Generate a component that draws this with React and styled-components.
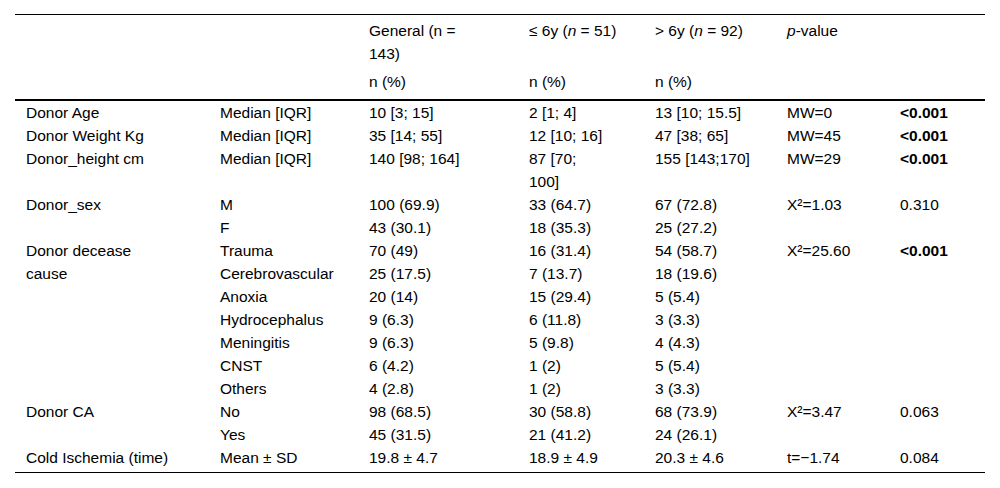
import styled, { createGlobalStyle } from 'styled-components';

const GlobalStyle = createGlobalStyle`
    body {
        margin: 0;
        background: #fff;
        font-family: "Liberation Sans", Arial, sans-serif;
        color: #000;
    }
`;

const Page = styled.div`
    width: 1000px;
    height: 488px;
    padding: 14px 15px 0 15px;
    box-sizing: border-box;
`;

const Table = styled.table`
    width: 970px;
    border-collapse: collapse;
    table-layout: fixed;
    font-size: 15.5px;
    line-height: 23px;
    border-top: 1px solid #000;
    border-bottom: 1px solid #000;
`;

const Head = styled.thead`
    border-bottom: 2px solid #000;
`;

const Th = styled.th`
    text-align: left;
    font-weight: normal;
    vertical-align: top;
    padding: ${({ $sub }) => ($sub ? '5px 0 6px 11px' : '4px 0 0 11px')};
`;

const Td = styled.td`
    vertical-align: top;
    padding: 0 0 0 11px;
    font-weight: ${({ $bold }) => ($bold ? 'bold' : 'normal')};
`;

const LastRow = styled.tr`
    & > td {
        padding-bottom: 3px;
    }
`;

const widths = [194, 149, 160, 126, 132, 113, 96];

const rows = [
    ['Donor Age', 'Median [IQR]', '10 [3; 15]', '2 [1; 4]', '13 [10; 15.5]', 'MW=0', '<0.001', true],
    ['Donor Weight Kg', 'Median [IQR]', '35 [14; 55]', '12 [10; 16]', '47 [38; 65]', 'MW=45', '<0.001', true],
    ['Donor_height cm', 'Median [IQR]', '140 [98; 164]', <>87 [70;<br />100]</>, '155 [143;170]', 'MW=29', '<0.001', true],
];

const Row = ({ cells, bold }) => (
    <tr>
        {cells.map((c, i) => (
            <Td key={i} $bold={bold && i === 6}>{c}</Td>
        ))}
    </tr>
);

const App = () => {
    return (
        <>
            <GlobalStyle />
            <Page>
                <Table>
                    <colgroup>
                        {widths.map((w, i) => <col key={i} style={{ width: w }} />)}
                    </colgroup>
                    <Head>
                        <tr>
                            <Th />
                            <Th />
                            <Th>General (n =<br />143)</Th>
                            <Th>≤ 6y (<i>n</i> = 51)</Th>
                            <Th>&gt; 6y (<i>n</i> = 92)</Th>
                            <Th><i>p</i>-value</Th>
                            <Th />
                        </tr>
                        <tr>
                            <Th $sub />
                            <Th $sub />
                            <Th $sub>n (%)</Th>
                            <Th $sub>n (%)</Th>
                            <Th $sub>n (%)</Th>
                            <Th $sub />
                            <Th $sub />
                        </tr>
                    </Head>
                    <tbody>
                        {rows.map((r, i) => (
                            <Row key={i} cells={r.slice(0, 7)} bold={r[7]} />
                        ))}
                        <tr>
                            <Td rowSpan={2}>Donor_sex</Td>
                            <Td>M</Td>
                            <Td>100 (69.9)</Td>
                            <Td>33 (64.7)</Td>
                            <Td>67 (72.8)</Td>
                            <Td rowSpan={2}>X²=1.03</Td>
                            <Td rowSpan={2}>0.310</Td>
                        </tr>
                        <tr>
                            <Td>F</Td>
                            <Td>43 (30.1)</Td>
                            <Td>18 (35.3)</Td>
                            <Td>25 (27.2)</Td>
                        </tr>
                        <tr>
                            <Td rowSpan={7}>Donor decease<br />cause</Td>
                            <Td>Trauma</Td>
                            <Td>70 (49)</Td>
                            <Td>16 (31.4)</Td>
                            <Td>54 (58.7)</Td>
                            <Td rowSpan={7}>X²=25.60</Td>
                            <Td rowSpan={7} $bold>&lt;0.001</Td>
                        </tr>
                        {[
                            ['Cerebrovascular', '25 (17.5)', '7 (13.7)', '18 (19.6)'],
                            ['Anoxia', '20 (14)', '15 (29.4)', '5 (5.4)'],
                            ['Hydrocephalus', '9 (6.3)', '6 (11.8)', '3 (3.3)'],
                            ['Meningitis', '9 (6.3)', '5 (9.8)', '4 (4.3)'],
                            ['CNST', '6 (4.2)', '1 (2)', '5 (5.4)'],
                            ['Others', '4 (2.8)', '1 (2)', '3 (3.3)'],
                        ].map((r, i) => (
                            <Row key={i} cells={r} />
                        ))}
                        <tr>
                            <Td rowSpan={2}>Donor CA</Td>
                            <Td>No</Td>
                            <Td>98 (68.5)</Td>
                            <Td>30 (58.8)</Td>
                            <Td>68 (73.9)</Td>
                            <Td rowSpan={2}>X²=3.47</Td>
                            <Td rowSpan={2}>0.063</Td>
                        </tr>
                        <tr>
                            <Td>Yes</Td>
                            <Td>45 (31.5)</Td>
                            <Td>21 (41.2)</Td>
                            <Td>24 (26.1)</Td>
                        </tr>
                        <LastRow>
                            <Td>Cold Ischemia (time)</Td>
                            <Td>Mean ± SD</Td>
                            <Td>19.8 ± 4.7</Td>
                            <Td>18.9 ± 4.9</Td>
                            <Td>20.3 ± 4.6</Td>
                            <Td>t=−1.74</Td>
                            <Td>0.084</Td>
                        </LastRow>
                    </tbody>
                </Table>
            </Page>
        </>
    );
};

export default App;
